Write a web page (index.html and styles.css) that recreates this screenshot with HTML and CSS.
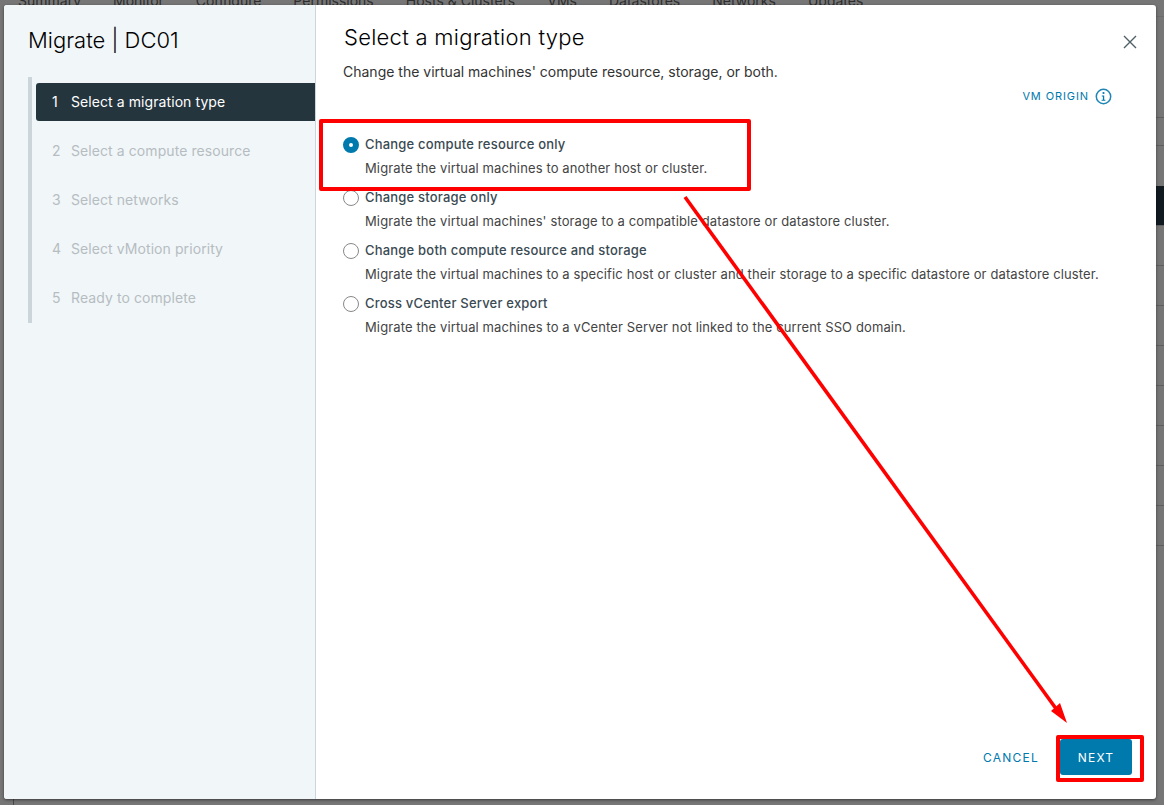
FILE: index.html
```html
<!DOCTYPE html>
<html lang="en">
<head>
<meta charset="utf-8">
<title>Migrate | DC01</title>
<link rel="stylesheet" href="styles.css">
</head>
<body>
<div class="backdrop">
  <nav class="bg-tabs"><span>Summary</span><span>Monitor</span><span>Configure</span><span>Permissions</span><span>Hosts &amp; Clusters</span><span>VMs</span><span>Datastores</span><span>Networks</span><span>Updates</span></nav>
  <div class="bg-rows">
    <div class="bg-row r1"></div><div class="bg-row r2"></div><div class="bg-row r3"></div><div class="bg-row r4"></div><div class="bg-row dark"></div><div class="bg-row"></div><div class="bg-row"></div><div class="bg-row"></div><div class="bg-row"></div><div class="bg-row"></div><div class="bg-row"></div><div class="bg-row"></div><div class="bg-row"></div>
  </div>
  <div class="bg-tick"></div>
</div>
<main class="dialog">
  <aside class="side">
    <h1 class="side-title">Migrate | DC01</h1>
    <ol class="steps">
      <li class="step active"><span class="num">1</span>Select a migration type</li>
      <li class="step"><span class="num">2</span>Select a compute resource</li>
      <li class="step"><span class="num">3</span>Select networks</li>
      <li class="step"><span class="num">4</span>Select vMotion priority</li>
      <li class="step"><span class="num">5</span>Ready to complete</li>
    </ol>
  </aside>
  <section class="content">
    <header class="head">
      <h2 class="title">Select a migration type</h2>
      <svg class="close" width="14" height="14" viewBox="0 0 14 14"><path d="M1 1l12 12M13 1L1 13" stroke="#4f5f68" stroke-width="1.4" fill="none"/></svg>
    </header>
    <p class="lead">Change the virtual machines' compute resource, storage, or both.</p>
    <div class="origin"><span>VM ORIGIN</span>
      <svg width="17" height="17" viewBox="0 0 17 17"><circle cx="8.5" cy="8.5" r="7.2" fill="none" stroke="#1f86b5" stroke-width="1.5"/><circle cx="8.5" cy="5" r="1.1" fill="#0079ad"/><path d="M6.8 7.5h2.4v4.2h1.2v1.1H6.6v-1.1h1.3V8.6H6.8z" fill="#0079ad"/></svg>
    </div>
    <div class="options">
      <label class="opt"><span class="radio on"></span><span class="opt-name">Change compute resource only</span><span class="opt-desc">Migrate the virtual machines to another host or cluster.</span></label>
      <label class="opt"><span class="radio"></span><span class="opt-name">Change storage only</span><span class="opt-desc">Migrate the virtual machines' storage to a compatible datastore or datastore cluster.</span></label>
      <label class="opt"><span class="radio"></span><span class="opt-name">Change both compute resource and storage</span><span class="opt-desc">Migrate the virtual machines to a specific host or cluster and their storage to a specific datastore or datastore cluster.</span></label>
      <label class="opt"><span class="radio"></span><span class="opt-name">Cross vCenter Server export</span><span class="opt-desc">Migrate the virtual machines to a vCenter Server not linked to the current SSO domain.</span></label>
    </div>
    <footer class="foot">
      <button class="btn link">CANCEL</button>
      <button class="btn primary">NEXT</button>
    </footer>
  </section>
</main>
<div class="mark box-a"></div>
<div class="mark box-b"></div>
<svg class="arrow" width="1164" height="805" viewBox="0 0 1164 805"><path d="M685 197L1057 710" stroke="#f00" stroke-width="3.6" fill="none"/><path d="M1067 723L1051 711L1060 703z" fill="#f00"/></svg>
</body>
</html>
```
FILE: styles.css
```css
* { box-sizing: border-box; }
html, body { margin: 0; height: 100%; }
body { width: 1164px; height: 805px; overflow: hidden; position: relative; background: #767676; font-family: "Inter", "Noto Sans", sans-serif; }
.backdrop { position: absolute; inset: 0; overflow: hidden; }
.bg-tabs { display: flex; gap: 32px; margin: -8px 0 0 18px; font-size: 14px; color: #2e2e2e; }
.bg-rows { position: absolute; right: 0; top: 0; width: 20px; }
.bg-row { height: 40px; border-bottom: 1px solid #5f5f5f; }
.bg-row.r1 { height: 17px; border-bottom-color: #6c6c6c; }
.bg-row.r2 { height: 101px; }
.bg-row.r3 { height: 28px; }
.bg-row.r4 { height: 40px; border-bottom: 0; }
.bg-row.dark { height: 40px; background: #101a20; }
.bg-tick { position: absolute; left: 13px; bottom: 0; width: 1px; height: 6px; background: #4a4a4a; }
.dialog { position: absolute; left: 4px; top: 5px; width: 1152px; height: 794px; display: flex; background: #fff; border-radius: 3px; overflow: hidden; box-shadow: 0 1px 3px rgba(0,0,0,.5); }
.side { width: 312px; flex: none; background: #f1f6f9; border-right: 1px solid #ccd5da; padding: 22px 0 0 24px; }
.side-title { margin: 0; font-size: 22px; line-height: 27px; font-weight: 300; color: #000; }
.steps { list-style: none; margin: 23px 0 0; padding: 6px 0 6px 4px; border-left: 4px solid #ccd5da; }
.step { height: 38px; margin-bottom: 11px; padding: 0 0 1px 16px; display: flex; align-items: center; font-size: 14px; color: #b6bdc1; letter-spacing: .08px; }
.step:last-child { margin-bottom: 0; }
.step.active { background: #25353e; color: #fff; border-radius: 3px 0 0 3px; }
.num { width: 19px; flex: none; }
.content { flex: 1; position: relative; padding: 18px 0 0 27px; }
.head { display: flex; justify-content: space-between; }
.title { margin: 0 0 0 1px; font-size: 22px; line-height: 28px; font-weight: 300; color: #000; letter-spacing: .27px; }
.close { margin: 12px 19px 0 0; }
.lead { margin: 11px 0 0; font-size: 14px; line-height: 20px; color: #333; }
.origin { display: flex; align-items: center; justify-content: flex-end; gap: 6px; margin: 5px 44px 0 0; height: 18px; font-size: 11px; color: #0079ad; letter-spacing: .9px; }
.options { margin-top: 30px; }
.opt { display: grid; grid-template-columns: 22px 1fr; grid-template-rows: auto auto; align-content: start; height: 53px; }
.radio { width: 16px; height: 16px; margin-top: 2px; border: 1px solid #888; border-radius: 50%; background: #fff; }
.radio.on { border: 6px solid #0079ad; }
.opt-name { font-size: 13px; line-height: 18px; font-weight: 500; color: #3a4a52; letter-spacing: .2px; }
.opt-desc { grid-column: 2; font-size: 13px; line-height: 18px; margin-top: 6px; color: #444; letter-spacing: .12px; }
.foot { position: absolute; right: 24px; bottom: 24px; display: flex; align-items: center; gap: 21px; }
.btn { height: 36px; border: 0; font: inherit; font-size: 12px; letter-spacing: 1.2px; border-radius: 3px; }
.btn.link { background: none; color: #0079ad; padding: 0; width: 56px; }
.btn.primary { background: #0079ad; color: #fff; width: 72px; }
.mark { position: absolute; border: 4px solid #f00; border-radius: 2px; }
.box-a { left: 319px; top: 119px; width: 432px; height: 72px; }
.box-b { left: 1056px; top: 735px; width: 88px; height: 47px; }
.arrow { position: absolute; left: 0; top: 0; }
```
